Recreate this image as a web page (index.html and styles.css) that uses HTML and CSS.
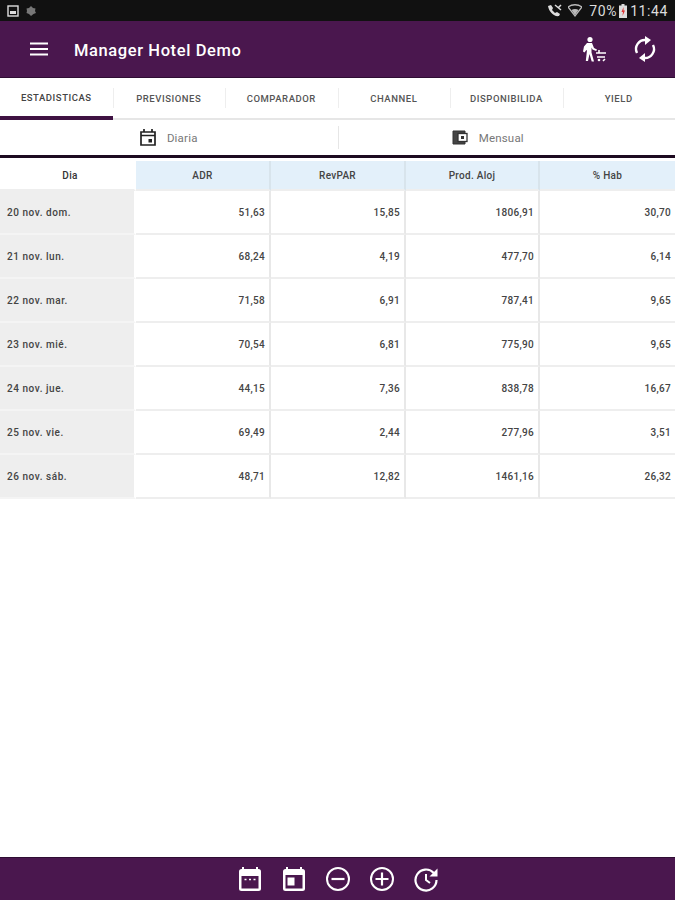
FILE: index.html
```html
<!DOCTYPE html>
<html lang="es">
<head>
  <meta charset="UTF-8">
  <title>Manager Hotel Demo</title>
  <link rel="stylesheet" href="styles.css">
</head>
<body>
  <div class="status-bar">
    <div class="status-left">
      <svg width="12" height="12" viewBox="0 0 12 12"><rect x="1" y="1" width="10" height="10" fill="none" stroke="#ddd" stroke-width="1.4"/><rect x="3" y="6" width="6" height="3" fill="#ddd"/></svg>
      <svg width="12" height="12" viewBox="0 0 12 12"><path d="M6 1l2 2 2.500 .5L10 6l1 2-2.500 1L6 11 4 9 1.500 8 2 6 1.500 3.500 4 3z" fill="#777"/></svg>
    </div>
    <div class="status-right">
      <svg width="16" height="14" viewBox="0 0 16 14"><path d="M2 2l3-1 2 3-1 2 3 3 2-1 3 2-1 2C8 13 3 8 2 2z" fill="#ddd"/><path d="M9 1l6 5M15 1l-3 3" stroke="#ddd" stroke-width="1.500" fill="none"/></svg>
      <svg class="wifi" width="14" height="14" viewBox="0 0 14 14"><path d="M0 3c4-3 10-3 14 0L7 12z" fill="none" stroke="#bbb" stroke-width="1.300"/><path d="M3.500 6c2-1.200 5-1.200 7 0L7 11z" fill="#bbb"/></svg>
      <span class="pct">70%</span>
      <svg width="8" height="14" viewBox="0 0 8 14"><rect x="2.500" y="0" width="3" height="2" fill="#ddd"/><rect x="0" y="1.500" width="8" height="12.500" fill="#ddd"/><path d="M4.500 3L2.500 8h1.500L3.500 12 6 6.500H4.500z" fill="#d33"/></svg>
      <span class="clock">11:44</span>
    </div>
  </div>

  <header class="app-bar">
    <svg class="menu-icon" width="18" height="14" viewBox="0 0 18 14"><path d="M0 1.500h18M0 7h18M0 12.500h18" stroke="#fff" stroke-width="2"/></svg>
    <h1>Manager Hotel Demo</h1>
    <div class="app-actions">
      <svg width="28" height="28" viewBox="0 0 28 28"><circle cx="10" cy="4.500" r="2.600" fill="#fff"/><path d="M7 8h5l2 5 3 1.500-.8 1.500-3.700-1.500-1-2v5l2.500 9h-2.300L9.500 19 8 26H5.800L7 15l-1 .5-1.500 2L3 16.500l1-5z" fill="#fff"/><path d="M16 18h10M17 22h8M19 18v-3M23 26l2-2" stroke="#fff" stroke-width="1.600" fill="none"/><circle cx="19" cy="25" r="1.300" fill="#fff"/></svg>
      <svg width="24" height="26" viewBox="0 0 24 26"><path d="M4 17a9 9 0 0 1 9-13" fill="none" stroke="#fff" stroke-width="2.400"/><path d="M12 0l6 4-6 5z" fill="#fff"/><path d="M20 9a9 9 0 0 1-9 13" fill="none" stroke="#fff" stroke-width="2.400"/><path d="M12 26l-6-4 6-5z" fill="#fff"/></svg>
    </div>
  </header>

  <nav class="tabs">
    <div class="tab active">ESTADISTICAS</div>
    <div class="tab">PREVISIONES</div>
    <div class="tab">COMPARADOR</div>
    <div class="tab">CHANNEL</div>
    <div class="tab clipped"><span>DISPONIBILIDAD</span></div>
    <div class="tab">YIELD</div>
  </nav>

  <div class="period">
    <div class="period-item">
      <svg width="16" height="17" viewBox="0 0 16 17"><path d="M1 3h14v13H1zM1 6.500h14M4 0v3M12 0v3" fill="none" stroke="#222" stroke-width="1.700"/><rect x="8.500" y="10" width="3.500" height="3.500" fill="#222"/></svg>
      <span>Diaria</span>
    </div>
    <div class="period-item monthly">
      <svg width="16" height="15" viewBox="0 0 16 15"><path d="M1 1h12v13H1z" fill="#444" stroke="#333"/><rect x="6" y="3.500" width="9" height="8" fill="#fff" stroke="#333" stroke-width="1.300"/><rect x="9" y="6" width="3" height="3" fill="#333"/></svg>
      <span>Mensual</span>
    </div>
  </div>

  <div class="stats">
    <div class="cell head first">Dia</div>
    <div class="cell head">ADR</div>
    <div class="cell head">RevPAR</div>
    <div class="cell head">Prod. Aloj</div>
    <div class="cell head">% Hab</div>

    <div class="cell day">20 nov. dom.</div>
    <div class="cell num">51,63</div><div class="cell num">15,85</div><div class="cell num">1806,91</div><div class="cell num">30,70</div>

    <div class="cell day">21 nov. lun.</div>
    <div class="cell num">68,24</div><div class="cell num">4,19</div><div class="cell num">477,70</div><div class="cell num">6,14</div>

    <div class="cell day">22 nov. mar.</div>
    <div class="cell num">71,58</div><div class="cell num">6,91</div><div class="cell num">787,41</div><div class="cell num">9,65</div>

    <div class="cell day">23 nov. mié.</div>
    <div class="cell num">70,54</div><div class="cell num">6,81</div><div class="cell num">775,90</div><div class="cell num">9,65</div>

    <div class="cell day">24 nov. jue.</div>
    <div class="cell num">44,15</div><div class="cell num">7,36</div><div class="cell num">838,78</div><div class="cell num">16,67</div>

    <div class="cell day">25 nov. vie.</div>
    <div class="cell num">69,49</div><div class="cell num">2,44</div><div class="cell num">277,96</div><div class="cell num">3,51</div>

    <div class="cell day">26 nov. sáb.</div>
    <div class="cell num">48,71</div><div class="cell num">12,82</div><div class="cell num">1461,16</div><div class="cell num">26,32</div>
  </div>

  <footer class="bottom-bar">
    <svg width="26" height="26" viewBox="0 0 26 26"><path d="M6 1v4M20 1v4" stroke="#fff" stroke-width="2"/><rect x="2" y="3" width="22" height="22" rx="2.500" fill="#fff"/><rect x="4.500" y="10" width="17" height="12.500" fill="#4a174e"/><path d="M7.500 13.500h2M12 13.500h2M16.500 13.500h2" stroke="#fff" stroke-width="1.600"/></svg>
    <svg width="26" height="26" viewBox="0 0 26 26"><path d="M6 1v4M20 1v4" stroke="#fff" stroke-width="2"/><rect x="2" y="3" width="22" height="22" rx="2.500" fill="#fff"/><rect x="4.500" y="9" width="17" height="13.500" fill="#4a174e"/><rect x="6.500" y="11.500" width="7" height="8" fill="#fff"/></svg>
    <svg width="26" height="26" viewBox="0 0 26 26"><circle cx="13" cy="13" r="11" fill="none" stroke="#fff" stroke-width="2"/><path d="M6.500 13h13" stroke="#fff" stroke-width="2.200"/></svg>
    <svg width="26" height="26" viewBox="0 0 26 26"><circle cx="13" cy="13" r="11" fill="none" stroke="#fff" stroke-width="2"/><path d="M6.500 13h13M13 6.500v13" stroke="#fff" stroke-width="2.200"/></svg>
    <svg width="26" height="26" viewBox="0 0 26 26"><path d="M20.800 7A10.500 10.500 0 1 0 23.500 14" fill="none" stroke="#fff" stroke-width="2.200"/><path d="M24.500 2.500v8h-8z" fill="#fff"/><path d="M13 8v6l4 3" fill="none" stroke="#fff" stroke-width="2"/></svg>
  </footer>
</body>
</html>
```

FILE: styles.css
```css
* {
  box-sizing: border-box;
}

html, body {
  height: 100%;
}

body {
  margin: 0;
  display: flex;
  flex-direction: column;
  background: #fff;
  font-family: Roboto, "Liberation Sans", sans-serif;
  overflow: hidden;
}

.status-bar {
  height: 21px;
  padding: 0 7px;
  display: flex;
  justify-content: space-between;
  align-items: center;
  background: #111;
  color: #ddd;
}

.status-left, .status-right {
  display: flex;
  align-items: center;
}

.status-left {
  gap: 6px;
}

.status-right {
  gap: 2px;
  font-size: 14px;
}

.wifi {
  margin-left: 4px;
  margin-right: 5px;
}

.pct {
  letter-spacing: 0.6px;
}

.clock {
  margin-left: 1px;
  letter-spacing: 0.6px;
}

.app-bar {
  height: 57px;
  display: flex;
  align-items: center;
  padding: 0 18px 0 30px;
  background: #4a174e;
  border-bottom: 1px solid #2f0d33;
}

.menu-icon {
  margin-top: -1px;
}

.app-bar h1 {
  margin: 2px 0 0 26px;
  font-size: 16.500px;
  font-weight: 500;
  letter-spacing: 0.6px;
  color: #fff;
}

.app-actions {
  margin-left: auto;
  display: flex;
  align-items: center;
  gap: 25px;
}

.tabs {
  height: 42px;
  display: grid;
  grid-template-columns: repeat(6, 1fr);
  border-bottom: 2px solid #e6e6e6;
}

.tab {
  position: relative;
  display: flex;
  align-items: center;
  justify-content: center;
  overflow: hidden;
  font-size: 9.500px;
  font-weight: 500;
  letter-spacing: 0.55px;
  color: #555;
  white-space: nowrap;
}

.tab.clipped {
  justify-content: flex-start;
  padding-left: 20px;
}

.tab.clipped span {
  width: 73px;
  overflow: hidden;
}

.tab.active {
  border-bottom: 4px solid #3f1242;
  margin-bottom: -2px;
  color: #444;
}

.tab + .tab::before {
  content: "";
  position: absolute;
  left: 0;
  top: 10px;
  bottom: 10px;
  width: 1px;
  background: #eee;
}

.period {
  height: 38px;
  display: grid;
  grid-template-columns: 1fr 1fr;
  border-bottom: 3px solid #1d0a20;
}

.period-item {
  display: flex;
  align-items: center;
  justify-content: center;
  gap: 11px;
  font-size: 11.500px;
  letter-spacing: 0.2px;
  color: #777;
}

.period-item.monthly {
  border-left: 1px solid #e6e6e6;
  margin: 6px 0;
  padding-right: 38px;
}

.stats {
  display: grid;
  grid-template-columns: 136px 135px 135px 134px 135px;
  grid-template-rows: 30px repeat(7, 44px);
  padding-top: 3px;
  background: #fff;
}

.cell {
  display: flex;
  align-items: center;
  font-size: 10px;
  letter-spacing: 0.3px;
  color: #444;
  border-right: 2px solid #e8e8e8;
  border-bottom: 2px solid #eee;
}

.cell.head {
  justify-content: center;
  background: #e3f0fa;
  font-weight: 500;
  border-right-color: #d8e4ec;
}

.cell.head.first {
  padding-left: 6px;
  background: #fff;
  color: #333;
  border-right-color: #fff;
  border-bottom-color: #eee;
}

.cell.day {
  padding-left: 7px;
  background: #eee;
  font-weight: 500;
  letter-spacing: 0.55px;
  border-right-color: #fff;
  border-bottom-color: #f4f4f4;
}

.cell.num {
  justify-content: flex-end;
  padding-right: 4px;
  font-weight: 500;
}

.stats .cell:nth-child(5n) {
  border-right: 0;
}

.bottom-bar {
  margin-top: auto;
  height: 43px;
  display: flex;
  justify-content: center;
  align-items: center;
  gap: 18px;
  background: #4a174e;
  border-top: 1px solid #2f0d33;
}
```
